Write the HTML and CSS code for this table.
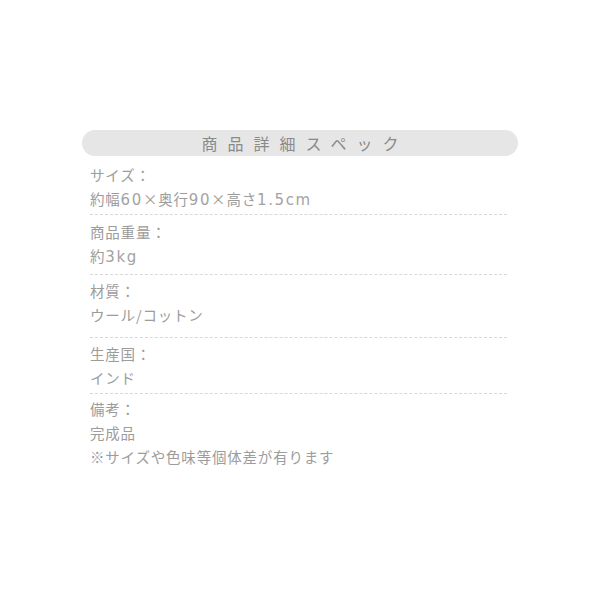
FILE: index.html
```html
<!DOCTYPE html>
<html lang="ja">
<head>
<meta charset="utf-8">
<link rel="stylesheet" href="styles.css">
</head>
<body>
<div class="spec">
  <div class="spec-title">商品詳細スペック</div>
  <div class="spec-list">
    <div class="spec-item spec-item--a">
      <div class="spec-label">サイズ：</div>
      <div class="spec-value">約幅<span class="num">60</span>×奥行<span class="num">90</span>×高さ<span class="num">1.5cm</span></div>
    </div>
    <div class="spec-item spec-item--b">
      <div class="spec-label">商品重量：</div>
      <div class="spec-value">約<span class="num">3kg</span></div>
    </div>
    <div class="spec-item spec-item--c">
      <div class="spec-label">材質：</div>
      <div class="spec-value">ウール/コットン</div>
    </div>
    <div class="spec-item spec-item--d">
      <div class="spec-label">生産国：</div>
      <div class="spec-value">インド</div>
    </div>
    <div class="spec-item spec-item--last">
      <div class="spec-label">備考：</div>
      <div class="spec-value">完成品</div>
      <div class="spec-value">※サイズや色味等個体差が有ります</div>
    </div>
  </div>
</div>
</body>
</html>
```
FILE: styles.css
```css
html, body {
  margin: 0;
  padding: 0;
  background: #ffffff;
}
body {
  font-family: "Noto Sans CJK JP", "Noto Sans", sans-serif;
  color: #9c9c9c;
}
.spec {
  width: 436px;
  margin: 130px 0 0 82px;
}
.spec-title {
  height: 26px;
  line-height: 26px;
  border-radius: 13px;
  background: #e6e6e6;
  color: #8a8a8a;
  font-size: 16px;
  letter-spacing: 10px;
  padding-left: 10px;
  text-align: center;
}
.spec-list {
  display: flex;
  flex-direction: column;
  padding: 3px 11px 0 8px;
}
.spec-item {
  padding: 4px 0 3px;
  border-bottom: 1px dashed #d9d9d9;
  font-size: 14.5px;
  letter-spacing: 0.8px;
  line-height: 24px;
}
.spec-item--a { padding-top: 4px; padding-bottom: 3px; }
.spec-item--b { padding-top: 5px; padding-bottom: 6px; }
.spec-item--c { padding-top: 4px; padding-bottom: 10px; }
.spec-item--d { padding-top: 4px; padding-bottom: 3px; }
.spec-item--last {
  border-bottom: none;
  padding-top: 3px;
}
.spec-label, .spec-value {
  white-space: nowrap;
}
.num {
  font-family: "DejaVu Sans", "Noto Sans", sans-serif;
  font-size: 15px;
  line-height: 1;
  letter-spacing: 1.6px;
  color: #a3a3a3;
}
```
